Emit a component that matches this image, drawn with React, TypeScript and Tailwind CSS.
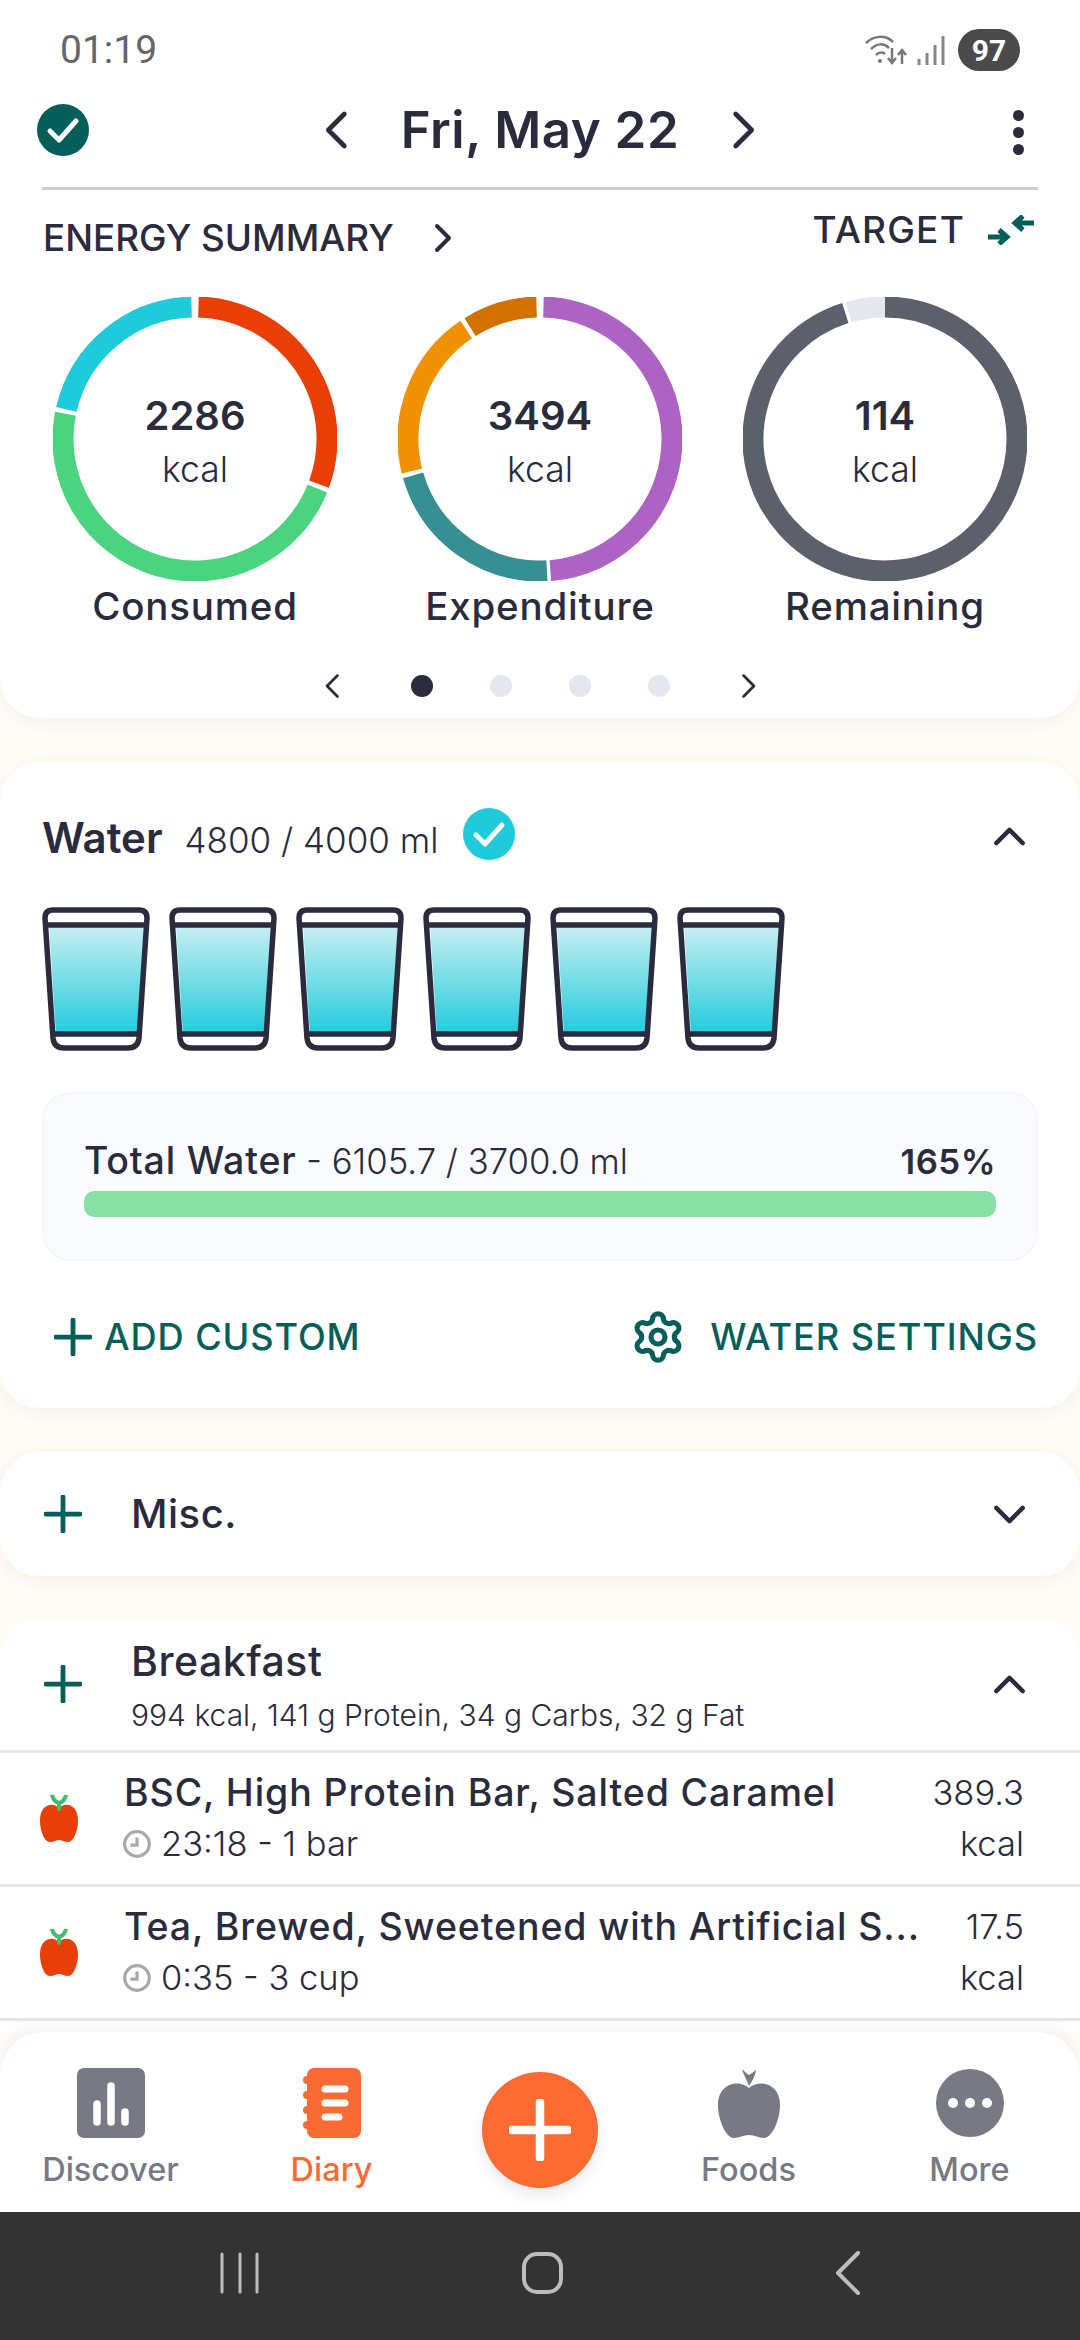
import { Settings } from 'lucide-react';

const INK = '#2a2c3d';
const TEAL = '#045f5b';

function polar(cx: number, cy: number, r: number, deg: number) {
  const a = ((deg - 90) * Math.PI) / 180;
  return `${cx + r * Math.cos(a)} ${cy + r * Math.sin(a)}`;
}

function Ring({ segments, value, label }: { segments: [number, number, string][]; value: string; label: string }) {
  return (
    <div className="flex flex-col items-center w-[284px]">
      <div className="relative w-[284px] h-[284px]">
        <svg width="284" height="284" viewBox="0 0 284 284">
          {segments.map(([from, to, color]) => (
            <path
              key={color}
              d={`M ${polar(142, 142, 132, from)} A 132 132 0 ${to - from > 180 ? 1 : 0} 1 ${polar(142, 142, 132, to)}`}
              fill="none"
              stroke={color}
              strokeWidth="21"
            />
          ))}
        </svg>
        <div className="absolute inset-0 flex flex-col items-center pt-[96px]">
          <span className="text-[40px] leading-[46px] font-semibold text-[#2a2c3d]">{value}</span>
          <span className="text-[35.5px] leading-[42px] mt-[10px] font-light text-[#2a2c3d]">kcal</span>
        </div>
      </div>
      <span className="mt-[3px] text-[38.5px] leading-[44px] font-medium tracking-[0.8px] text-[#2a2c3d]">{label}</span>
    </div>
  );
}

function Chevron({ dir, size = 30, sw = 4, color = INK }: { dir: 'l' | 'r' | 'u' | 'd'; size?: number; sw?: number; color?: string }) {
  const pts = {
    l: '19,3 7,15 19,27',
    r: '11,3 23,15 11,27',
    u: '3,21 15,9 27,21',
    d: '3,9 15,21 27,9',
  }[dir];
  return (
    <svg width={size} height={size} viewBox="0 0 30 30" className="shrink-0">
      <polyline points={pts} fill="none" stroke={color} strokeWidth={sw} strokeLinecap="round" strokeLinejoin="round" />
    </svg>
  );
}

function Plus({ size = 40, color = TEAL, sw = 5 }: { size?: number; color?: string; sw?: number }) {
  return (
    <svg width={size} height={size} viewBox="0 0 40 40" className="shrink-0">
      <path d="M20 2v36M2 20h36" stroke={color} strokeWidth={sw} strokeLinecap="round" />
    </svg>
  );
}

function Glass({ id }: { id: string }) {
  return (
    <svg width="108" height="144" viewBox="0 0 108 144" className="shrink-0">
      <defs>
        <linearGradient id={id} x1="0" y1="0" x2="0" y2="1">
          <stop offset="0" stopColor="#c9eff3" />
          <stop offset="1" stopColor="#1fcbdb" />
        </linearGradient>
      </defs>
      <path d="M7 18 L102 18 L95 128 L14 128 Z" fill={`url(#${id})`} />
      <path
        d="M11 3 H97 Q105 3 105 11 L97 131 Q96 141 86 141 H22 Q12 141 11 131 L3 11 Q3 3 11 3 Z"
        fill="none"
        stroke={INK}
        strokeWidth="5.5"
        strokeLinejoin="round"
      />
      <path d="M4 18 H104 M10 127 H98" stroke={INK} strokeWidth="5.5" />
    </svg>
  );
}

function CheckBadge({ color, size }: { color: string; size: number }) {
  return (
    <svg width={size} height={size} viewBox="0 0 52 52" className="shrink-0">
      <circle cx="26" cy="26" r="26" fill={color} />
      <polyline points="13,27 22,36 39,17" fill="none" stroke="#fff" strokeWidth="5" strokeLinecap="round" strokeLinejoin="round" />
    </svg>
  );
}

function Apple() {
  return (
    <svg width="42" height="48" viewBox="0 0 42 48" className="shrink-0">
      <path d="M21 13 C14 6 2 10 2 25 C2 35 6 47 12 47 C16 47 18 45 21 45 C24 45 26 47 30 47 C36 47 40 35 40 25 C40 10 28 6 21 13 Z" fill="#e83e07" />
      <path d="M21 14 L21 8 M21 8 C17 7 15 4 14 0 M21 8 C25 7 27 4 28 0" stroke="#3fbf6b" strokeWidth="4" fill="none" strokeLinecap="round" />
    </svg>
  );
}

function FoodRow({ name, meta, amount }: { name: string; meta: string; amount: string }) {
  return (
    <div className="h-[134px] border-b-[3px] border-[#e6e7ea] flex items-center pl-[38px] pr-[56px]">
      <Apple />
      <div className="flex-1 min-w-0 ml-[44px]">
        <div className="whitespace-nowrap text-[37.5px] leading-[50px] font-medium tracking-[0.9px] text-[#2a2c3d]">{name}</div>
        <div className="flex items-center mt-[1px] text-[34.5px] leading-[50px] font-light text-[#2a2c3d]">
          <svg width="30" height="30" viewBox="0 0 28 28" className="mr-[9px] -ml-[2px] shrink-0">
            <circle cx="14" cy="14" r="11.5" fill="none" stroke="#a9a9a9" strokeWidth="3" />
            <path d="M14 8v7h-6" fill="none" stroke="#a9a9a9" strokeWidth="3" />
          </svg>
          {meta}
        </div>
      </div>
      <div className="text-right text-[34.5px] leading-[50px] font-light text-[#2a2c3d]">
        <div>{amount}</div>
        <div className="mt-[1px]">kcal</div>
      </div>
    </div>
  );
}

function NavItem({ label, active, children }: { label: string; active?: boolean; children: React.ReactNode }) {
  return (
    <div className="flex flex-col items-center">
      <div className="h-[70px] flex items-center justify-center">{children}</div>
      <span className={`mt-[13px] text-[32.5px] leading-[38px] font-medium ${active ? 'text-[#f96b32]' : 'text-[#777a85]'}`}>{label}</span>
    </div>
  );
}

export default function App() {
  return (
    <div className="w-[1080px] h-[2340px] overflow-hidden flex flex-col bg-[#fffbf5] font-['Inter',sans-serif]">
      <div className="flex-1 min-h-0 flex flex-col">
        {/* Summary card */}
        <div className="h-[718px] shrink-0 bg-white rounded-b-[40px] shadow-[0_4px_16px_rgba(120,100,60,0.06)]">
          <div className="h-[100px] flex items-center justify-between pl-[60px] pr-[60px] text-[#666]">
            <span className="text-[39px] font-['Roboto',sans-serif]">01:19</span>
            <div className="flex items-center">
              <svg width="44" height="36" viewBox="0 0 44 36" className="mr-[8px]">
                <path d="M1 11 C9 3 21 3 28 10 M6 17 C12 11 19 11 24 16 M11 23 C14 20 18 20 20 22" fill="none" stroke="#777" strokeWidth="2.5" />
                <circle cx="15" cy="29" r="2" fill="#777" />
                <path d="M27 16v14m-4-4l4 5 4-5M37 32V19m-4 4l4-5 4 5" fill="none" stroke="#777" strokeWidth="2.5" />
              </svg>
              <svg width="30" height="32" viewBox="0 0 30 32" className="mr-[11px]">
                <path d="M2 25v6M10 19v12M18 11v20M26 2v29" stroke="#888" strokeWidth="3" />
              </svg>
              <span className="w-[62px] h-[42px] rounded-full bg-[#4a4a4a] text-white text-[30px] font-['Roboto',sans-serif] font-bold flex items-center justify-center">97</span>
            </div>
          </div>
          <div className="relative mx-[42px] h-[90px] border-b-[3px] border-[#cdced3] flex items-start justify-center pt-[2px]">
            <div className="absolute left-[-5px] top-[4px]"><CheckBadge color={TEAL} size={52} /></div>
            <div className="flex items-center gap-[42px] h-[56px]">
              <Chevron dir="l" size={40} sw={3.5} />
              <span className="text-[51px] leading-[56px] font-semibold tracking-[0.5px] text-[#2a2c3d]">Fri, May 22</span>
              <Chevron dir="r" size={40} sw={3.5} />
            </div>
            <div className="absolute right-[14px] top-[10px] flex flex-col gap-[6px]">
              <span className="w-[11px] h-[11px] rounded-full bg-[#2a2c3d]" />
              <span className="w-[11px] h-[11px] rounded-full bg-[#2a2c3d]" />
              <span className="w-[11px] h-[11px] rounded-full bg-[#2a2c3d]" />
            </div>
          </div>
          <div className="px-[43px] pt-[20px] flex justify-between items-start h-[68px]">
            <div className="flex items-center gap-[32px] pt-[8px]">
              <span className="text-[36.8px] leading-[40px] font-medium text-[#2a2c3d]">ENERGY SUMMARY</span>
              <Chevron dir="r" size={30} sw={4} />
            </div>
            <div className="flex items-center gap-[22px] mr-[2px]">
              <span className="text-[37px] leading-[40px] font-medium tracking-[1.2px] text-[#2a2c3d]">TARGET</span>
              <svg width="48" height="30" viewBox="0 0 46 30">
                <path d="M46 8H27M35 1l-8 7 8 7" fill="none" stroke={TEAL} strokeWidth="5" />
                <path d="M0 22h19M11 15l8 7-8 7" fill="none" stroke={TEAL} strokeWidth="5" />
              </svg>
            </div>
          </div>
          <div className="flex justify-between pl-[53px] pr-[53px] mt-[39px]">
            <Ring value="2286" label="Consumed" segments={[[1.5, 110, '#e93f06'], [112, 281, '#4ad47f'], [283, 358.5, '#1fcbdb']]} />
            <Ring value="3494" label="Expenditure" segments={[[1.5, 175.5, '#ad63c4'], [177, 254, '#358f93'], [256, 326, '#f09100'], [328, 358.5, '#d27100']]} />
            <Ring value="114" label="Remaining" segments={[[0, 342.5, '#5c606b'], [344, 360, '#e4e7ed']]} />
          </div>
          <div className="flex items-center justify-center mt-[43px] h-[30px]">
            <Chevron dir="l" size={26} sw={3.2} />
            <span className="ml-[64px] w-[22px] h-[22px] rounded-full bg-[#2a2c3d]" />
            <span className="ml-[57px] w-[22px] h-[22px] rounded-full bg-[#e4e7ef]" />
            <span className="ml-[57px] w-[22px] h-[22px] rounded-full bg-[#e4e7ef]" />
            <span className="ml-[57px] w-[22px] h-[22px] rounded-full bg-[#e4e7ef]" />
            <span className="ml-[64px]"><Chevron dir="r" size={26} sw={3.2} /></span>
          </div>
        </div>

        {/* Water card */}
        <div className="mt-[44px] h-[646px] shrink-0 bg-white rounded-[40px] shadow-[0_4px_16px_rgba(120,100,60,0.06)] px-[42px] pt-[46px]">
          <div className="flex items-center h-[60px]">
            <span className="text-[42px] leading-[46px] font-semibold text-[#2a2c3d]">Water</span>
            <span className="ml-[22px] mt-[4px] text-[35px] leading-[46px] font-light text-[#2a2c3d]">4800 / 4000 ml</span>
            <span className="ml-[24px] -mt-[8px]"><CheckBadge color="#1fcbdb" size={52} /></span>
            <span className="ml-auto mr-[12px] -mt-[4px]"><Chevron dir="u" size={33} sw={4} /></span>
          </div>
          <div className="flex gap-[19px] mt-[39px]">
            {['g1', 'g2', 'g3', 'g4', 'g5', 'g6'].map(id => <Glass key={id} id={id} />)}
          </div>
          <div className="mt-[41px] h-[169px] w-[996px] rounded-[28px] bg-[#fafbfe] border-2 border-[#f5f6f8] px-[40px] pt-[42px]">
            <div className="flex justify-between items-center h-[50px] text-[34.7px]">
              <span className="text-[#2a2c3d] font-light">
                <span className="text-[37.5px] font-medium tracking-[0.8px]">Total Water</span> - 6105.7 / 3700.0 ml
              </span>
              <span className="font-semibold text-[#2a2c3d] tracking-[0.5px]">165%</span>
            </div>
            <div className="mt-[5px] h-[26px] rounded-[10px] bg-[#88e0a4]" />
          </div>
          <div className="flex justify-between items-center mt-[48px] text-[36.2px] font-medium tracking-[0.9px] text-[#045f5b]">
            <div className="flex items-center gap-[12px] ml-[12px]">
              <Plus size={38} />
              <span>ADD CUSTOM</span>
            </div>
            <div className="flex items-center gap-[24px]">
              <Settings size={56} strokeWidth={2.2} color={TEAL} />
              <span>WATER SETTINGS</span>
            </div>
          </div>
        </div>

        {/* Misc card */}
        <div className="mt-[44px] h-[124px] shrink-0 bg-white rounded-[40px] shadow-[0_4px_16px_rgba(120,100,60,0.06)] flex items-center pl-[44px] pr-[54px]">
          <Plus size={38} />
          <span className="ml-[49px] text-[40px] font-medium tracking-[0.5px] text-[#2a2c3d]">Misc.</span>
          <span className="ml-auto"><Chevron dir="d" size={33} sw={4} /></span>
        </div>

        {/* Breakfast card */}
        <div className="mt-[42px] flex-1 min-h-0 bg-white rounded-t-[40px]">
          <div className="h-[135px] border-b-[3px] border-[#e6e7ea] flex items-center pl-[44px] pr-[54px]">
            <Plus size={38} />
            <div className="ml-[49px] flex flex-col pt-[4px]">
              <span className="text-[41px] leading-[46px] font-medium tracking-[0.5px] text-[#2a2c3d]">Breakfast</span>
              <span className="mt-[11px] text-[30px] leading-[40px] font-light text-[#2a2c3d]">994 kcal, 141 g Protein, 34 g Carbs, 32 g Fat</span>
            </div>
            <span className="ml-auto"><Chevron dir="u" size={33} sw={4} /></span>
          </div>
          <FoodRow name="BSC, High Protein Bar, Salted Caramel" meta="23:18 - 1 bar" amount="389.3" />
          <FoodRow name="Tea, Brewed, Sweetened with Artificial S..." meta="0:35 - 3 cup" amount="17.5" />
        </div>
      </div>

      {/* Bottom nav */}
      <div className="h-[180px] shrink-0 bg-white rounded-t-[44px] shadow-[0_-6px_16px_rgba(60,60,90,0.05)] grid grid-cols-[221px_221px_196px_221px_221px] pt-[36px]">
        <NavItem label="Discover">
          <svg width="68" height="70" viewBox="0 0 68 70">
            <rect width="68" height="70" rx="7" fill="#777a85" />
            <path d="M20 36v18M34 18v36M48 44v10" stroke="#fff" strokeWidth="7.5" strokeLinecap="round" />
          </svg>
        </NavItem>
        <NavItem label="Diary" active>
          <svg width="58" height="70" viewBox="0 0 58 70">
            <rect x="4" width="54" height="70" rx="7" fill="#f96b32" />
            <path d="M4 12v0M4 27v0M4 42v0M4 57v0" stroke="#f96b32" strokeWidth="8" strokeLinecap="round" />
            <path d="M22 21h20M22 35h20M22 49h14" stroke="#fff" strokeWidth="7" strokeLinecap="round" />
          </svg>
        </NavItem>
        <div className="flex justify-center pt-[4px]">
          <div className="w-[116px] h-[116px] rounded-full bg-[#fd6a32] flex items-center justify-center shadow-[0_8px_14px_rgba(60,60,60,0.1)]">
            <Plus size={62} color="#fff" sw={5.5} />
          </div>
        </div>
        <NavItem label="Foods">
          <svg width="64" height="70" viewBox="0 0 64 70">
            <path d="M32 20 C22 11 1 15 1 37 C1 52 9 70 17 70 C23 70 26 67 32 67 C38 67 41 70 47 70 C55 70 63 52 63 37 C63 15 42 11 32 20 Z" fill="#777a85" />
            <path d="M32 18 C30 12 27 8 25 1 C28 4 30 6 32 7 C34 6 36 4 39 2 C38 9 35 13 32 18 Z" fill="#777a85" />
          </svg>
        </NavItem>
        <NavItem label="More">
          <svg width="68" height="70" viewBox="0 0 68 70">
            <circle cx="34" cy="35" r="34" fill="#777a85" />
            <circle cx="17" cy="35" r="5" fill="#fff" />
            <circle cx="34" cy="35" r="5" fill="#fff" />
            <circle cx="51" cy="35" r="5" fill="#fff" />
          </svg>
        </NavItem>
      </div>

      {/* System nav */}
      <div className="h-[128px] shrink-0 bg-[#333333] flex items-center justify-center gap-[218px] pb-[6px]">
        <svg width="42" height="42" viewBox="0 0 42 42">
          <path d="M3 2v38M21 2v38M38 2v38" stroke="#bdbdbd" strokeWidth="3" strokeLinecap="round" />
        </svg>
        <svg width="44" height="44" viewBox="0 0 44 44" className="ml-[42px]">
          <rect x="3" y="3" width="37" height="38" rx="13" fill="none" stroke="#bdbdbd" strokeWidth="4" />
        </svg>
        <svg width="26" height="44" viewBox="0 0 26 44" className="ml-[52px]">
          <polyline points="23,2 3,22 23,42" fill="none" stroke="#bdbdbd" strokeWidth="4" strokeLinecap="round" strokeLinejoin="round" />
        </svg>
      </div>
    </div>
  );
}
